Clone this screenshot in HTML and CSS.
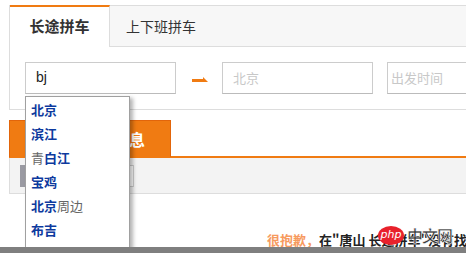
FILE: index.html
```html
<!DOCTYPE html>
<html lang="zh-CN">
<head>
  <meta charset="UTF-8" />
  <title>拼车搜索</title>
  <link rel="stylesheet" href="styles.css">
</head>
<body>
  <div class="page">
    <div class="search-box">
      <div class="tabs">
        <div class="tab active">长途拼车</div>
        <div class="tab">上下班拼车</div>
      </div>
      <div class="form-row">
        <div class="field">bj</div>
        <div class="arrow"><span class="arrow-line"></span><span class="arrow-head"></span></div>
        <div class="field placeholder">北京</div>
        <div class="field placeholder date">出发时间</div>
      </div>
    </div>

    <div class="list-head">
      <div class="list-tab">长途拼车信息</div>
    </div>
    <div class="filter-bar">
      <div class="filter-btn"></div>
      <div class="filter-input"></div>
    </div>

    <p class="notice">
      <span class="sorry">很抱歉，</span>在"唐山 长途拼车"没有找到相关信息
      <span class="watermark"><span class="wm-logo">php</span><span class="wm-text">中文网</span></span>
    </p>

    <ul class="suggest">
      <li><b>北京</b></li>
      <li><b>滨江</b></li>
      <li>青<b>白江</b></li>
      <li><b>宝鸡</b></li>
      <li><b>北京</b>周边</li>
      <li><b>布吉</b></li>
      <li><b>巴中</b></li>
    </ul>
  </div>
  <div class="scrollbar"></div>
</body>
</html>
```

FILE: styles.css
```css
html, body {
  margin: 0;
  padding: 0;
  overflow: hidden;
}

body {
  background: #fff;
  font-family: "Noto Sans CJK SC", "Noto Sans", sans-serif;
  color: #333;
}

.page {
  position: relative;
  width: 720px;
  padding: 5px 0 0 9px;
}

/* search panel */
.search-box {
  border-left: 1px solid #ddd;
  border-bottom: 1px solid #ddd;
}

.tabs {
  display: flex;
  height: 40px;
  background: #f7f7f7;
  border-top: 1px solid #ddd;
  border-bottom: 1px solid #ddd;
}

.tab {
  width: 100px;
  box-sizing: border-box;
  font-size: 14px;
  line-height: 40px;
  text-align: center;
  color: #333;
  padding-left: 2px;
}

.tab.active {
  padding-left: 0;
  background: #fff;
  font-size: 15px;
  font-weight: bold;
  border-top: 2px solid #f07b12;
  border-right: 1px solid #ddd;
  margin-top: -1px;
  margin-bottom: -1px;
  height: 42px;
  line-height: 38px;
}

.form-row {
  display: flex;
  align-items: center;
  padding: 15px;
}

.field {
  width: 151px;
  height: 32px;
  box-sizing: border-box;
  border: 1px solid #ccc;
  border-bottom-color: #bbb;
  padding-left: 10px;
  font-size: 14px;
  line-height: 29px;
  color: #222;
  font-family: "Liberation Sans", Arial, sans-serif;
}

.field.placeholder {
  color: #c8c8c8;
  font-size: 13px;
  font-family: "Noto Sans CJK SC", sans-serif;
}

.field.date {
  margin-left: 14px;
  padding-left: 3px;
}

.arrow {
  width: 46px;
  display: flex;
  justify-content: center;
  align-items: flex-end;
  height: 8px;
  padding-left: 1px;
  box-sizing: border-box;
}

.arrow-line {
  width: 11px;
  height: 3px;
  background: #f07b12;
}

.arrow-head {
  width: 0;
  height: 0;
  border-left: 5px solid #f07b12;
  border-top: 5px solid transparent;
}

/* list header */
.list-head {
  margin-top: 10px;
  height: 36px;
  border-bottom: 2px solid #f07b12;
}

.list-tab {
  width: 162px;
  height: 37px;
  box-sizing: border-box;
  background: #f07b12;
  border: 1px solid #e2650a;
  border-bottom: none;
  color: #fff;
  font-size: 16px;
  font-weight: bold;
  line-height: 36px;
  text-align: right;
  padding-right: 25px;
}

.filter-bar {
  display: flex;
  align-items: center;
  height: 35px;
  background: #f3f3f3;
  border-left: 1px solid #ddd;
  border-bottom: 1px solid #ddd;
  padding-left: 10px;
}

.filter-btn {
  width: 40px;
  height: 22px;
  background: #9a9aa2;
}

.filter-input {
  width: 72px;
  height: 20px;
  background: #fff;
  border: 1px solid #ccc;
}

.notice {
  margin: 36px 0 0 258px;
  font-size: 13px;
  font-weight: bold;
  color: #222;
  white-space: nowrap;
  position: relative;
}

.sorry {
  color: #f79a5e;
}

.watermark {
  position: absolute;
  left: 111px;
  top: -7px;
  display: flex;
  align-items: center;
}

.wm-logo {
  width: 26px;
  height: 19px;
  border-radius: 50%;
  background: #e8212b;
  color: #fff;
  font-family: "DejaVu Sans", sans-serif;
  font-style: italic;
  font-weight: normal;
  font-size: 11px;
  line-height: 18px;
  text-align: center;
}

.wm-text {
  margin-left: 3px;
  font-size: 16px;
  font-weight: bold;
  color: #3a3a3a;
  -webkit-text-stroke: 0.5px #fff;
  letter-spacing: -1px;
}

/* autocomplete */
.suggest {
  position: absolute;
  left: 25px;
  top: 96px;
  width: 105px;
  box-sizing: border-box;
  margin: 0;
  padding: 1px 0 0;
  list-style: none;
  background: #fff;
  border: 1px solid #a0a0a0;
  box-shadow: 3px 2px 4px rgba(0, 0, 0, 0.3);
}

.suggest li {
  height: 24px;
  line-height: 24px;
  padding-left: 5px;
  font-size: 13px;
  color: #666;
}

.suggest b {
  color: #0d3a9e;
}

.scrollbar {
  position: fixed;
  left: 0;
  right: 0;
  bottom: 0;
  height: 6px;
  background: #7f7f7f;
}
```
